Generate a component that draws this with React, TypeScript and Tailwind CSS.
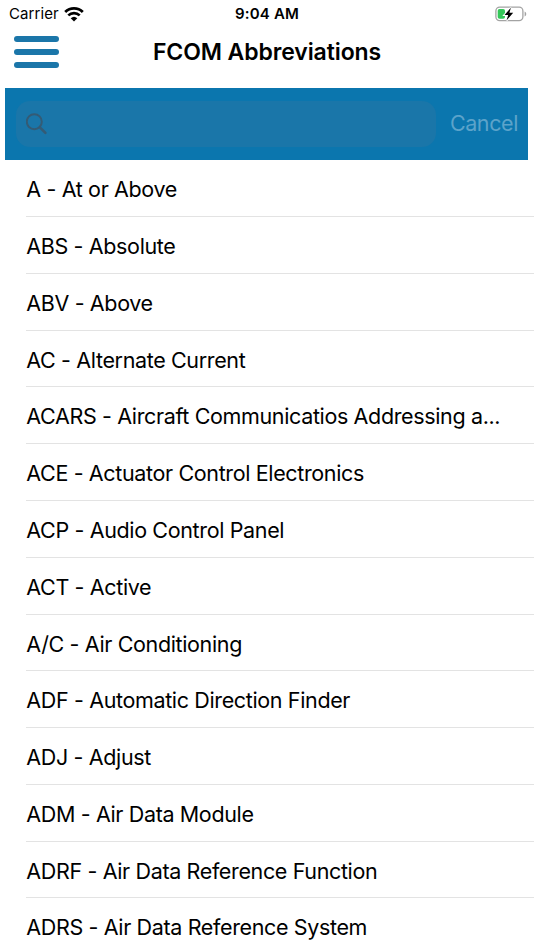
interface Abbreviation {
  code: string
  meaning: string
}

const ABBREVIATIONS: Abbreviation[] = [
  { code: "A", meaning: "At or Above" },
  { code: "ABS", meaning: "Absolute" },
  { code: "ABV", meaning: "Above" },
  { code: "AC", meaning: "Alternate Current" },
  {
    code: "ACARS",
    meaning: "Aircraft Communicatios Addressing a..."
  },
  { code: "ACE", meaning: "Actuator Control Electronics" },
  { code: "ACP", meaning: "Audio Control Panel" },
  { code: "ACT", meaning: "Active" },
  { code: "A/C", meaning: "Air Conditioning" },
  { code: "ADF", meaning: "Automatic Direction Finder" },
  { code: "ADJ", meaning: "Adjust" },
  { code: "ADM", meaning: "Air Data Module" },
  { code: "ADRF", meaning: "Air Data Reference Function" },
  { code: "ADRS", meaning: "Air Data Reference System" }
]

function WifiIcon() {
  return (
    <svg width="20" height="15" viewBox="0 0 20 15" fill="none">
      <path
        d="M1.2 5A12.6 12.6 0 0 1 18.8 5"
        stroke="#000"
        strokeWidth="2.8"
      />
      <path
        d="M4.3 8.4A8.2 8.2 0 0 1 15.7 8.4"
        stroke="#000"
        strokeWidth="2.7"
      />
      <path d="M10 14.6 6.7 11.3a4.8 4.8 0 0 1 6.6 0Z" fill="#000" />
    </svg>
  )
}

function BatteryIcon() {
  return (
    <svg width="32" height="16" viewBox="0 0 32 16" fill="none">
      <rect
        x="0.9"
        y="1.2"
        width="27"
        height="13.4"
        rx="3.8"
        stroke="#a3a3a3"
        strokeWidth="1.3"
      />
      <path d="M29.6 5.4c2.2.8 2.2 4.2 0 5Z" fill="#a3a3a3" />
      <rect x="2.7" y="3" width="7.3" height="9.8" rx="1.8" fill="#34c759" />
      <path
        d="m15.9 1.8-6.4 7.3h3.7l-1.6 5.2 6.6-7.5h-3.8Z"
        fill="#000"
        stroke="#fff"
        strokeWidth="2"
        paintOrder="stroke"
      />
    </svg>
  )
}

function SearchIcon() {
  return (
    <svg width="22" height="22" viewBox="0 0 22 22" fill="none">
      <circle cx="8.3" cy="8.7" r="7.5" stroke="#345b75" strokeWidth="2" />
      <path
        d="m13.9 14.4 5.5 5.5"
        stroke="#345b75"
        strokeWidth="2.6"
        strokeLinecap="round"
      />
    </svg>
  )
}

function StatusBar() {
  return (
    <div className="grid h-7 grid-cols-3 items-center pl-[9px] pr-[7px] text-[15px]">
      <div className="flex items-center gap-[5px]">
        <span className="tracking-[0.1px]">Carrier</span>
        <WifiIcon />
      </div>
      <span className="pr-[2px] text-center font-semibold tracking-[0.2px]">
        9:04 AM
      </span>
      <div className="flex justify-end">
        <BatteryIcon />
      </div>
    </div>
  )
}

function Header() {
  return (
    <header className="grid h-[60px] grid-cols-[120px_1fr_120px] pl-[14px] pr-[14px]">
      <button className="flex flex-col gap-[7px] pt-2" aria-label="Menu">
        <span className="h-[6px] w-[45px] rounded-full bg-[#1b76a9]" />
        <span className="h-[6px] w-[45px] rounded-full bg-[#1b76a9]" />
        <span className="h-[6px] w-[45px] rounded-full bg-[#1b76a9]" />
      </button>
      <h1 className="whitespace-nowrap text-center text-[23px] font-semibold leading-[48px] tracking-[-0.1px]">
        FCOM Abbreviations
      </h1>
    </header>
  )
}

function SearchBar() {
  return (
    <div className="ml-[5px] mr-[6px] flex h-[72px] items-center bg-[#0b76ae] pl-[11px] pr-[10px]">
      <div className="flex h-[46px] w-[420px] items-center rounded-[14px] bg-[#1a76a9] pl-[10px]">
        <SearchIcon />
      </div>
      <button className="ml-auto pb-[2px] text-[21.5px] tracking-[-0.4px] text-[#5ca3ca]">
        Cancel
      </button>
    </div>
  )
}

function AbbreviationRow({ code, meaning }: Abbreviation) {
  return (
    <li className="ml-[26px] h-[56.78px] truncate border-b border-[#e3e3e3] pl-[0.3px] text-[21.5px] leading-[58px] tracking-[-0.36px]">
      {code} - {meaning}
    </li>
  )
}

export default function App() {
  return (
    <div className="h-[950px] w-full overflow-hidden bg-white font-['Inter',sans-serif] text-black">
      <StatusBar />
      <Header />
      <SearchBar />
      <ul className="pt-[0.4px]">
        {ABBREVIATIONS.map((item) => (
          <AbbreviationRow key={item.code} {...item} />
        ))}
      </ul>
    </div>
  )
}
